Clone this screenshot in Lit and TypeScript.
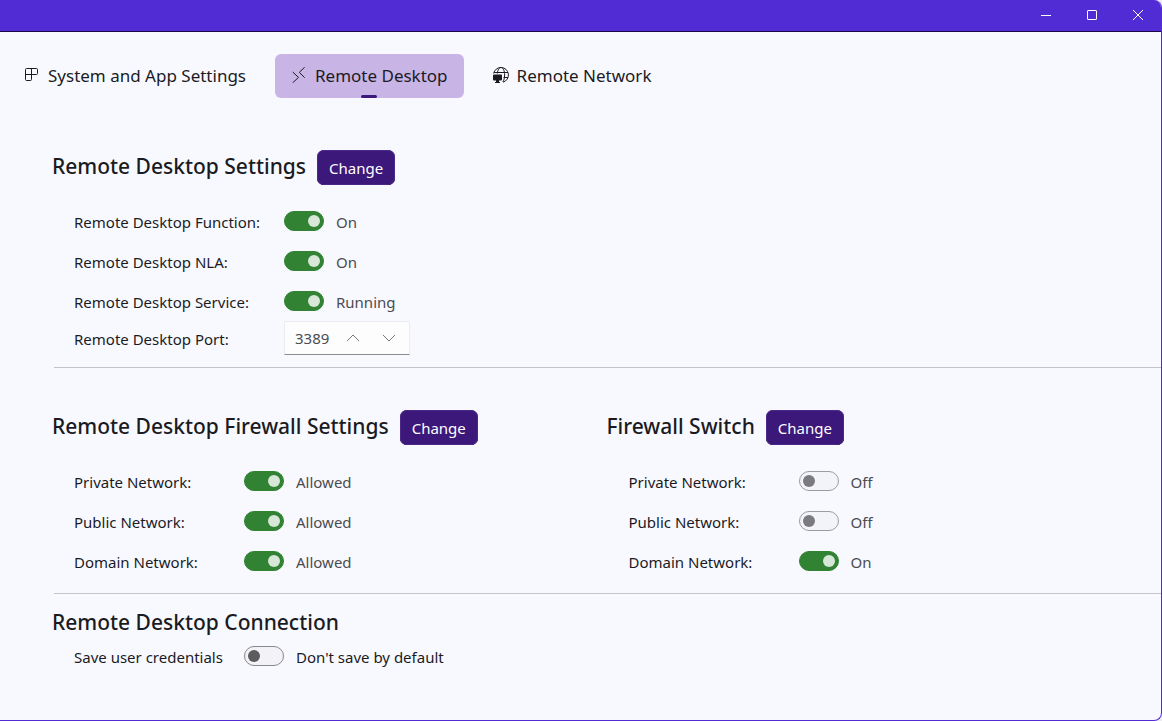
import { LitElement, html, css, svg, nothing } from "lit";
import { customElement, property, state } from "lit/decorators.js";

const icons = {
  layout: svg`<path d="M2.5 1.5h10a1 1 0 0 1 1 1v4a1 1 0 0 1-1 1h-11M7.5 1.5v11a1 1 0 0 1-1 1h-4a1 1 0 0 1-1-1v-10a1 1 0 0 1 1-1" />`,
  remote: svg`<path d="M1.700 5l5.800 5.400-5.800 5.400M13.700.2L8.300 5.300l5.400 5.400" />`,
  network: svg`<path d="M.6 6.5A7.5 7.5 0 1 1 10 15.2M1 5.5h14M10.5 10.5h4.5M4.4 6.5C4.7 3 6 .5 8 .5c2.200 0 3.600 3.300 3.600 7.500 0 3-.7 5.700-1.900 6.900" />
    <path class="solid" d="M1 7.500h7a1 1 0 0 1 1 1v4a1 1 0 0 1-1 1H6v1.500h1v1H2v-1h1v-1.500H1a1 1 0 0 1-1-1v-4a1 1 0 0 1 1-1z" />`,
};

type IconName = keyof typeof icons;

interface Toggle {
  id: string;
  label: string;
  on: boolean;
  onText: string;
  offText: string;
}

@customElement("toggle-row")
class ToggleRow extends LitElement {
  @property() label = "";
  @property() onText = "On";
  @property() offText = "Off";
  @property({ type: Boolean }) on = false;
  @property({ type: Boolean, reflect: true }) editable = false;
  @property({ type: Boolean, reflect: true }) wide = false;

  static styles = css`
    :host {
      display: block;
    }
    .row {
      display: flex;
      align-items: center;
      height: 20px;
      font-size: 15px;
      line-height: 20px;
    }
    .label,
    .value {
      padding-top: 2px;
    }
    .label {
      flex: none;
      width: 170px;
      color: #1b1b1f;
    }
    :host([wide]) .label {
      width: 210px;
    }
    .value {
      margin-left: 12px;
      color: #4c4c50;
    }
    :host([editable]) .value {
      color: #1b1b1f;
    }
    .switch {
      appearance: none;
      display: flex;
      align-items: center;
      flex: none;
      box-sizing: border-box;
      width: 40px;
      height: 20px;
      margin: 0;
      padding: 0 3px;
      border: 1px solid #9c9ca0;
      border-radius: 10px;
      background: #f3f4f9;
    }
    .switch::before {
      content: "";
      width: 12px;
      height: 12px;
      border-radius: 50%;
      background: #7b7a7f;
    }
    .switch:checked {
      justify-content: flex-end;
      border-color: #318233;
      background: #318233;
    }
    .switch:checked::before {
      background: #d6e6d7;
    }
    :host([editable]) .switch {
      border-color: #88888c;
      background: #f2f2f7;
    }
    :host([editable]) .switch::before {
      background: #5c5c5e;
    }
  `;

  private toggle(e: Event) {
    this.on = (e.target as HTMLInputElement).checked;
  }

  render() {
    return html`<div class="row">
      <label class="label" for="switch">${this.label}</label>
      <input class="switch" id="switch" type="checkbox" role="switch" .checked=${this.on} @change=${this.toggle} />
      <span class="value">${this.on ? this.onText : this.offText}</span>
    </div>`;
  }
}

@customElement("app-root")
class AppRoot extends LitElement {
  @state() private active = "Remote Desktop";
  @state() private port = 3389;

  private tabs: { name: string; icon: IconName }[] = [
    { name: "System and App Settings", icon: "layout" },
    { name: "Remote Desktop", icon: "remote" },
    { name: "Remote Network", icon: "network" },
  ];

  private desktop: Toggle[] = [
    { id: "function", label: "Remote Desktop Function:", on: true, onText: "On", offText: "Off" },
    { id: "nla", label: "Remote Desktop NLA:", on: true, onText: "On", offText: "Off" },
    { id: "service", label: "Remote Desktop Service:", on: true, onText: "Running", offText: "Stopped" },
  ];

  private rules: Toggle[] = ["Private", "Public", "Domain"].map((n) => ({
    id: n, label: `${n} Network:`, on: true, onText: "Allowed", offText: "Blocked",
  }));

  private firewall: Toggle[] = ["Private", "Public", "Domain"].map((n) => ({
    id: n, label: `${n} Network:`, on: n === "Domain", onText: "On", offText: "Off",
  }));

  static styles = css`
    :host {
      display: block;
      background: #ececf0;
      font-family: "Noto Sans", "Open Sans", sans-serif;
      color: #1b1b1f;
    }
    .window {
      box-sizing: border-box;
      min-height: 100vh;
      border: solid #512bd4;
      border-width: 0 1px 1px 0;
      border-radius: 0 8px 8px 0;
      background: #f8f9ff;
      overflow: hidden;
    }
    .titlebar {
      display: flex;
      justify-content: flex-end;
      box-sizing: border-box;
      height: 32px;
      border-bottom: 1px solid #190649;
      background: #512bd4;
    }
    button {
      font: inherit;
      border: 0;
      padding: 0;
    }
    svg {
      display: block;
      flex: none;
      fill: none;
      stroke: currentColor;
    }
    .solid {
      fill: currentColor;
      stroke: none;
    }
    .caption {
      display: grid;
      place-items: center;
      width: 46px;
      padding-bottom: 1px;
      background: none;
      color: #fff;
    }
    .tabs {
      display: flex;
      gap: 13px;
      padding: 22px 8px 0;
    }
    .tab {
      position: relative;
      display: flex;
      align-items: center;
      gap: 8px;
      height: 44px;
      padding: 0 16px;
      border-radius: 6px;
      font-size: 17px;
      line-height: 24px;
      color: #1b1b1f;
      text-decoration: none;
    }
    .tab svg {
      padding-bottom: 2px;
    }
    .tab.active {
      background: #c9b4e6;
    }
    .tab.active::after {
      content: "";
      position: absolute;
      left: 50%;
      bottom: 0;
      width: 16px;
      height: 3px;
      margin-left: -8px;
      border-radius: 2px;
      background: #3b187a;
    }
    .content {
      padding-top: 52px;
    }
    .section {
      padding-left: 52px;
    }
    .columns {
      display: grid;
      grid-template-columns: 1fr 1fr;
      padding: 42px 0 22px 52px;
    }
    .columns .section {
      padding-left: 0;
    }
    .head {
      display: flex;
      align-items: center;
      gap: 11px;
      height: 35px;
    }
    .title {
      margin: 0;
      padding-bottom: 4px;
      font-size: 21px;
      line-height: 28px;
      font-weight: 500;
    }
    .change {
      box-sizing: border-box;
      height: 35px;
      padding: 1px 12px 0;
      border-radius: 7px;
      background: #3b187a;
      box-shadow: inset 0 0 0 1px #4a2988, inset 0 -1px #24094f;
      color: #fff;
      font-size: 15px;
      line-height: 20px;
    }
    .rows {
      display: flex;
      flex-direction: column;
      gap: 20px;
      padding: 26px 0 0 22px;
    }
    .port {
      display: flex;
      align-items: center;
      padding: 10px 0 12px 22px;
      font-size: 15px;
      line-height: 20px;
    }
    .port-label {
      width: 210px;
      padding-top: 2px;
    }
    .spin {
      display: flex;
      box-sizing: border-box;
      width: 126px;
      height: 34px;
      border: 1px solid #ececf0;
      border-bottom-color: #8c8c90;
      background: #fdfdfe;
      color: #79797d;
    }
    .number {
      appearance: textfield;
      box-sizing: border-box;
      width: 50px;
      border: 0;
      padding: 0 0 0 10px;
      background: none;
      font: inherit;
      color: #4c4c50;
    }
    .number::-webkit-inner-spin-button {
      display: none;
    }
    .step {
      display: grid;
      place-items: center;
      width: 36px;
      background: none;
      color: inherit;
    }
    .rule {
      height: 1px;
      margin: 0 0 0 54px;
      border: 0;
      background: #c3c3c9;
    }
    .connection {
      padding-top: 14px;
    }
    .connection .rows {
      padding-top: 6px;
    }
  `;

  private rows(items: Toggle[], wide = false) {
    return html`<div class="rows">
      ${items.map((t) => html`<toggle-row ?wide=${wide} .label=${t.label} .on=${t.on} .onText=${t.onText} .offText=${t.offText}></toggle-row>`)}
    </div>`;
  }

  private head(title: string) {
    return html`<div class="head">
      <h2 class="title">${title}</h2>
      <button class="change" type="button">Change</button>
    </div>`;
  }

  private select(e: Event, name: string) {
    e.preventDefault();
    this.active = name;
  }

  render() {
    return html`<div class="window">
      <header class="titlebar">
        <button class="caption" aria-label="Minimize"><svg width="10" height="10"><path d="M0 5.5h10" /></svg></button>
        <button class="caption" aria-label="Maximize"><svg width="10" height="10"><rect x="0.5" y="0.5" width="9" height="9" rx="0.5" /></svg></button>
        <button class="caption" aria-label="Close"><svg width="10" height="10"><path d="M0 0l10 10M10 0L0 10" /></svg></button>
      </header>
      <nav class="tabs">
        ${this.tabs.map((t) => html`<a
            class="tab ${t.name === this.active ? "active" : ""}"
            href="#"
            aria-current=${t.name === this.active ? "page" : nothing}
            @click=${(e: Event) => this.select(e, t.name)}
          ><svg width="16" height="16" viewBox="0 0 16 16">${icons[t.icon]}</svg><span>${t.name}</span></a>`)}
      </nav>
      <main class="content">
        <section class="section">
          ${this.head("Remote Desktop Settings")} ${this.rows(this.desktop, true)}
          <div class="port">
            <label class="port-label" for="port">Remote Desktop Port:</label>
            <div class="spin">
              <input class="number" id="port" type="number" .value=${String(this.port)} @change=${(e: Event) => (this.port = Number((e.target as HTMLInputElement).value))} />
              <button class="step" aria-label="Increase" @click=${() => this.port++}><svg width="14" height="8"><path d="M1 7l6-6 6 6" /></svg></button>
              <button class="step" aria-label="Decrease" @click=${() => this.port--}><svg width="14" height="8"><path d="M1 1l6 6 6-6" /></svg></button>
            </div>
          </div>
        </section>
        <hr class="rule" />
        <div class="columns">
          <section class="section">${this.head("Remote Desktop Firewall Settings")} ${this.rows(this.rules)}</section>
          <section class="section">${this.head("Firewall Switch")} ${this.rows(this.firewall)}</section>
        </div>
        <hr class="rule" />
        <section class="section connection">
          <h2 class="title">Remote Desktop Connection</h2>
          <div class="rows">
            <toggle-row editable label="Save user credentials" offText="Don't save by default" onText="Save by default"></toggle-row>
          </div>
        </section>
      </main>
    </div>`;
  }
}
